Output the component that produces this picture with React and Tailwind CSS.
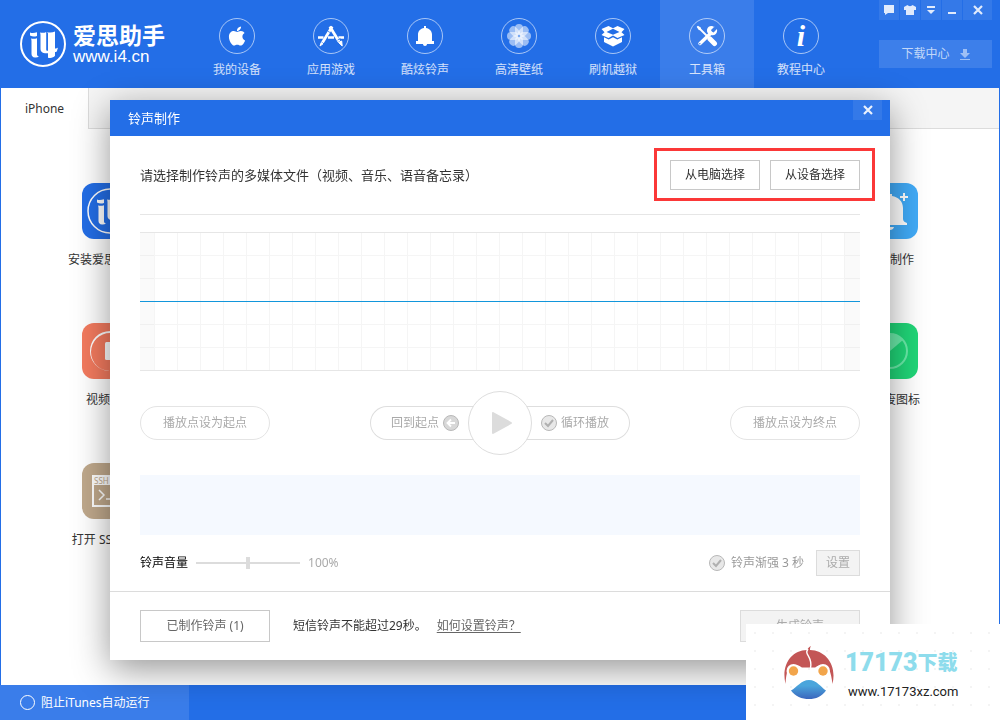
import { useState } from 'react';
import { FaApple } from 'react-icons/fa';

function LogoMark({ className, ring = 2 }) {
  return (
    <svg viewBox="0 0 46 46" className={className} fill="none" stroke="currentColor">
      <circle cx="23" cy="23" r="22" strokeWidth={ring} />
      <path d="M10 11.500c2 .8 4.500.6 7-.3V15c-2.500.8-4.500.8-7-.5z" fill="currentColor" stroke="none" />
      <path d="M11 17.500c2 .6 4 .4 6-.3V33.500c0 1 .8 1.800 2 2-1.200.8-2.300 1.200-4 1-2.500-.3-3.500-1.600-3.500-3.800V20c0-1-.2-1.800-.5-2.500z" fill="currentColor" stroke="none" />
      <path d="M20 11.500c2.300.6 4.500.4 6.200-.5v17.500c0 1 .7 1.400 1.800 1.200V13c0-1-.3-1.500-1-2 2.500.8 5.500.7 8-.5V27.500c1.300 0 2.200-.3 3-1l-1.200 4c-.6.4-1.200.5-1.800.5v3.800c-1.500 1.900-4 2.600-7 1.900v-4.500c-5 .4-7.500-1-7.500-4.700V14c0-1-.2-1.800-.5-2.500z" fill="currentColor" stroke="none" />
    </svg>
  );
}

function AppsIcon() {
  return (
    <svg viewBox="0 0 26 22" className="h-[22px] w-[26px]" stroke="currentColor" fill="none">
      <path d="M0 12.500h5.500M10 12.500h6M20.500 12.500H26" strokeWidth="2.600" />
      <path d="M14.200 1.500 4.500 17.500" strokeWidth="2.800" />
      <path d="M11.800 1.500 21 16.500" strokeWidth="2.800" />
      <path d="M3.200 17.500 2 21l3-2.200zM20.500 17.500l3.700 3.500-.5-5z" fill="currentColor" strokeWidth="1" />
      <path d="m9.500 6 3 1.800M19.500 15.200l3-1.800" stroke="#236ee7" strokeWidth="0.800" />
    </svg>
  );
}

function BellIcon({ className = 'h-5 w-[18px]' }) {
  return (
    <svg viewBox="0 0 18 20" className={className} fill="currentColor">
      <path d="M8 0h2v2c3.600.5 6 3.200 6 6.500V15h2v3h-7c0 1-.8 2-2 2s-2-1-2-2H0v-3h2V8.500C2 5.200 4.400 2.500 8 2z" />
    </svg>
  );
}

function FlowerIcon() {
  return (
    <svg viewBox="0 0 24 24" className="size-6" fill="currentColor">
      {[0, 45, 90, 135, 180, 225, 270, 315].map(a => (
        <rect key={a} x="8" y="0" width="8" height="11.500" rx="4" opacity="0.550" transform={`rotate(${a} 12 12)`} />
      ))}
      <circle cx="12" cy="12" r="1.200" fill="#7aa8f1" />
    </svg>
  );
}

function BoxIcon() {
  return (
    <svg viewBox="0 0 24 22" className="h-[22px] w-6" fill="currentColor">
      <path d="M7.500 1 12 3.300 16.500 1 23.500 4 20.500 7.300 23.500 10 16.500 13 12 10.500 7.500 13 .5 10 3.500 7.300.5 4z" />
      <path d="M12 3.800 18.500 7 12 9.800 5.500 7z" fill="#236ee7" />
      <path d="M3 12.300 7.700 14.400 12 12.300l4.300 2.100 4.700-2.100V17l-9 4.500L3 17z" />
    </svg>
  );
}

function ToolsIcon() {
  return (
    <svg viewBox="0 0 22 22" className="size-[22px]" fill="none" stroke="currentColor">
      <path d="M4 18.500 15 8" strokeWidth="3.400" strokeLinecap="round" />
      <path d="M18.500 1.500 15 5l.8 1.700 1.800.7 3.300-3.300c1 3.500-1.400 6.500-4.900 6.200-3.500-.2-5.800-3-4.800-6.300.9-2.700 4.200-4.200 7.300-1.800z" fill="currentColor" stroke="none" />
      <path d="m3 3 10 10" strokeWidth="1.800" />
      <path d="M.8 1.500 2 .8l3 2v2l-2 .5-2-2.800z" fill="currentColor" stroke="none" />
      <path d="m14 14 4.500 4.500" strokeWidth="5" strokeLinecap="round" />
      <circle cx="3.800" cy="18.700" r=".8" fill="#3a7dea" stroke="none" />
    </svg>
  );
}

function InfoIcon() {
  return <span className="font-['Liberation_Serif',serif] text-[30px] leading-none font-bold italic">i</span>;
}

function CloseIcon() {
  return (
    <svg viewBox="0 0 10 10" className="size-2.5" stroke="currentColor" strokeWidth="2.200">
      <path d="m1 1 8 8M9 1 1 9" />
    </svg>
  );
}

const navItems = [
  { label: '我的设备', icon: <FaApple size={22} /> },
  { label: '应用游戏', icon: <AppsIcon /> },
  { label: '酷炫铃声', icon: <BellIcon /> },
  { label: '高清壁纸', icon: <FlowerIcon /> },
  { label: '刷机越狱', icon: <BoxIcon /> },
  { label: '工具箱', icon: <ToolsIcon />, active: true },
  { label: '教程中心', icon: <InfoIcon /> },
];

const windowButtons = [
  {
    label: '反馈',
    icon: (
      <svg viewBox="0 0 10 10" className="size-2.5" fill="currentColor">
        <path d="M0 0h10v8H4l-3 2V8H0z" />
      </svg>
    ),
  },
  {
    label: '皮肤',
    icon: (
      <svg viewBox="0 0 12 10" className="h-2.5 w-3" fill="currentColor">
        <path d="M3.500 0c1 1.500 4 1.500 5 0L12 2v3h-2v5H2V5H0V2z" />
      </svg>
    ),
  },
  {
    label: '菜单',
    icon: (
      <svg viewBox="0 0 8 8" className="size-2" fill="currentColor">
        <path d="M0 0h8v2H0zM0 4h8L4 8z" />
      </svg>
    ),
  },
  {
    label: '最小化',
    icon: (
      <svg viewBox="0 0 8 8" className="size-2" fill="currentColor">
        <path d="M0 6h8v2H0z" />
      </svg>
    ),
  },
];

function Header() {
  return (
    <header className="flex h-22 text-white">
      <a href="#home" className="flex w-[190px] items-start pt-[21px] pl-5">
        <LogoMark className="size-[46px]" />
        <span className="ml-[7px] flex flex-col">
          <span className="text-[23px] leading-7 font-bold whitespace-nowrap">爱思助手</span>
          <span className="font-['Liberation_Sans',sans-serif] text-[17px] leading-4">www.i4.cn</span>
        </span>
      </a>
      <nav className="flex">
        {navItems.map(item => (
          <a
            key={item.label}
            href="#nav"
            className={`flex w-[94px] flex-col items-center pt-[18px] ${item.active ? 'bg-[#3a7dea]' : ''}`}
          >
            <span className="flex size-9 items-center justify-center rounded-full border border-white/60">
              {item.icon}
            </span>
            <span className="mt-[7px] leading-[18px] text-white/80">{item.label}</span>
          </a>
        ))}
      </nav>
      <div className="mr-2 ml-auto flex w-[113px] flex-col gap-5">
        <div className="flex h-5 gap-px text-white/85">
          {windowButtons.map(b => (
            <button key={b.label} aria-label={b.label} className="flex w-5 items-center justify-center bg-white/8">
              {b.icon}
            </button>
          ))}
          <button aria-label="关闭" className="flex flex-1 items-center justify-center bg-white/8">
            <CloseIcon />
          </button>
        </div>
        <button className="flex h-7 items-center justify-center gap-2.5 bg-white/12 text-white/70">
          下载中心
          <svg viewBox="0 0 10 11" className="h-[11px] w-2.5 text-white/50" fill="currentColor">
            <path d="M3 0h4v4h3L5 9 0 4h3zM0 10h10v1H0z" />
          </svg>
        </button>
      </div>
    </header>
  );
}

const tools = [
  [
    {
      label: '安装爱思移动端',
      tile: 'bg-[#236ee7]',
      icon: <LogoMark className="size-[46px]" ring={1.5} />,
    },
    {
      label: '铃声制作',
      tile: 'bg-[#41abf8]',
      icon: (
        <svg viewBox="0 0 56 56" className="size-14" fill="currentColor">
          <path d="M26 11h4v2c6.500 1 11 5.500 11 12v11c0 2 1.500 3 4 4v2H11v-2c2.500-1 4-2 4-4V25c0-6.500 4.500-11 11-12zM24 44h8c-.5 2-2 3-4 3s-3.500-1-4-3z" />
          <path d="M41 10h2v3h3v2h-3v3h-2v-3h-3v-2h3z" />
        </svg>
      ),
    },
  ],
  [
    {
      label: '视频转换',
      tile: 'bg-[#f47b5f]',
      icon: (
        <svg viewBox="0 0 56 56" className="size-14" fill="currentColor">
          <path d="M28 8a20 20 0 0 0 0 40A19 19 0 0 1 28 10z" />
          <rect x="23" y="19" width="10" height="18" rx="1.500" />
        </svg>
      ),
    },
    {
      label: '删除废图标',
      tile: 'bg-[#20d678]',
      icon: (
        <svg viewBox="0 0 56 56" className="size-14 text-[#6becaa]">
          <circle cx="28" cy="28" r="17" fill="none" stroke="currentColor" strokeWidth="2" />
          <path d="M28 28V11c5 0 9.500 2 13 6z" fill="currentColor" />
        </svg>
      ),
    },
  ],
  [
    {
      label: '打开 SSH 通道',
      tile: 'bg-[#c0a98c]',
      icon: (
        <span className="flex h-8 w-9 flex-col border-2 border-white text-left">
          <span className="bg-white text-[8px] leading-2 text-[#c0a98c]">SSH</span>
          <svg viewBox="0 0 32 20" className="h-5 w-8" fill="none" stroke="currentColor" strokeWidth="1.500">
            <path d="m5 5 5 5-5 5M12 14h8" />
          </svg>
        </span>
      ),
    },
  ],
];

function Toolbox() {
  return (
    <main className="mx-px flex-1 bg-white">
      <div className="flex h-[41px]">
        <button className="w-[87px] text-[#333]">iPhone</button>
        <div className="flex-1 border-b border-l border-[#dcdcdc] bg-[#f5f5f5]" />
      </div>
      <div className="flex flex-col gap-[55px] px-11 pt-[54px] text-[#333]">
        {tools.map((row, i) => (
          <div key={i} className="flex justify-between">
            {row.map(tool => (
              <button key={tool.label} className="flex w-[130px] flex-col items-center gap-[13px]">
                <span className={`flex size-14 items-center justify-center rounded-xl text-white ${tool.tile}`}>
                  {tool.icon}
                </span>
                <span className="leading-4 whitespace-nowrap">{tool.label}</span>
              </button>
            ))}
          </div>
        ))}
      </div>
    </main>
  );
}

function RoundCheck({ label, className, checked, onChange }) {
  return (
    <label className={`flex items-center ${className}`}>
      <span className="grid size-4 place-items-center">
        <input
          type="checkbox"
          checked={checked}
          onChange={onChange}
          className="peer col-start-1 row-start-1 size-4 appearance-none rounded-full border border-[#b8b8b8] bg-[#e8e8e8]"
        />
        <svg
          viewBox="0 0 10 10"
          className="pointer-events-none invisible col-start-1 row-start-1 size-2.5 peer-checked:visible"
          fill="none"
          stroke="#b0b0b0"
          strokeWidth="2"
        >
          <path d="m1 5 3 3 5-6" />
        </svg>
      </span>
      {label}
    </label>
  );
}

function Waveform() {
  return (
    <div className="relative mt-[17px] flex h-[139px] border-y border-[#e6e6e6] bg-[linear-gradient(to_top,#f5f5f5_1px,transparent_1px)] bg-size-[23px_23px]">
      <div className="w-3.5 bg-black/2" />
      <div className="flex-1 bg-[linear-gradient(to_right,#f5f5f5_1px,transparent_1px)] bg-size-[23px_23px]" />
      <div className="w-4 border-l border-[#f3f3f3] bg-black/2" />
      <div className="absolute inset-x-0 top-17 h-px bg-[#1296db]" />
    </div>
  );
}

function RingtoneDialog() {
  const [loop, setLoop] = useState(true);
  const [fade, setFade] = useState(true);
  const [volume, setVolume] = useState(50);

  return (
    <div className="fixed inset-0 flex items-start justify-center pt-[100px]">
      <section role="dialog" aria-label="铃声制作" className="w-full max-w-[780px] bg-white shadow-[0_9px_34px_rgba(0,0,0,0.42)]">
        <div className="flex h-9 bg-[#236ee7] pr-2 pl-[18px] text-[13px] text-white">
          <h1 className="leading-9">铃声制作</h1>
          <button aria-label="关闭" className="ml-auto flex h-5 w-[29px] items-center justify-center bg-white/8 text-white/90">
            <CloseIcon />
          </button>
        </div>

        <div className="px-[30px] pt-6">
          <div className="flex items-center border-b border-[#e6e6e6] pb-6 text-[#333]">
            <p className="text-[13px] leading-[30px]">请选择制作铃声的多媒体文件（视频、音乐、语音备忘录）</p>
            <div className="relative ml-auto flex gap-2.5">
              <button className="h-[30px] w-[90px] border border-[#c8c8c8]">从电脑选择</button>
              <button className="h-[30px] w-[90px] border border-[#c8c8c8]">从设备选择</button>
              <div className="pointer-events-none absolute -top-3 -right-[15px] -bottom-[11px] -left-4 border-3 border-[#fb3838]" />
            </div>
          </div>

          <Waveform />

          <div className="mt-5 flex items-center justify-between text-[#aaa]">
            <button className="h-[34px] w-[130px] rounded-full border border-[#e4e4e4]">播放点设为起点</button>
            <div className="flex items-center">
              <button className="-mr-3 flex h-[34px] w-[110px] items-center gap-1 rounded-l-full border border-r-0 border-[#dedede] pl-5">
                回到起点
                <svg viewBox="0 0 16 16" className="size-4" fill="none">
                  <circle cx="8" cy="8" r="7.500" fill="#d8d8d8" stroke="#b8b8b8" />
                  <path d="M12 8H5M8 4.500 4.500 8 8 11.500" stroke="#fff" strokeWidth="1.800" />
                </svg>
              </button>
              <button aria-label="播放" className="z-10 flex size-16 items-center justify-center rounded-full border border-[#dedede] bg-white">
                <svg viewBox="0 0 20 22" className="ml-1 h-[22px] w-5" fill="#dcdcdc" stroke="#dcdcdc" strokeWidth="2" strokeLinejoin="round">
                  <path d="M1 1v20l18-10z" />
                </svg>
              </button>
              <RoundCheck
                label="循环播放"
                checked={loop}
                onChange={e => setLoop(e.target.checked)}
                className="-ml-3 h-[34px] w-[110px] gap-1 rounded-r-full border border-l-0 border-[#dedede] pl-[21px]"
              />
            </div>
            <button className="h-[34px] w-[130px] rounded-full border border-[#e4e4e4]">播放点设为终点</button>
          </div>

          <div className="mt-5 h-15 bg-[#f5f9ff]" />

          <div className="flex items-center py-[15px] text-[#999]">
            <label htmlFor="volume" className="text-black">铃声音量</label>
            <input
              id="volume"
              type="range"
              value={volume}
              onChange={e => setVolume(Number(e.target.value))}
              className="mx-2 h-3 w-26 appearance-none bg-[linear-gradient(#dcdcdc,#dcdcdc)] bg-size-[100%_2px] bg-center bg-no-repeat [&::-webkit-slider-thumb]:h-3 [&::-webkit-slider-thumb]:w-1 [&::-webkit-slider-thumb]:appearance-none [&::-webkit-slider-thumb]:bg-[#dcdcdc]"
            />
            <span className="text-[#aaa]">{volume * 2}%</span>
            <RoundCheck label="铃声渐强 3 秒" checked={fade} onChange={e => setFade(e.target.checked)} className="mr-3 ml-auto gap-1.5" />
            <button disabled className="h-[26px] w-11 border border-[#dcdcdc] bg-[#f3f3f3] text-[#aaa]">设置</button>
          </div>
        </div>

        <div className="flex items-center border-t border-[#dcdcdc] px-[30px] py-[18px] text-[#333]">
          <button className="h-8 w-[130px] border border-[#c8c8c8] text-[#666]">已制作铃声 (1)</button>
          <p className="ml-[23px]">短信铃声不能超过29秒。</p>
          <a href="#help" className="ml-2.5 text-[#666] underline underline-offset-2">如何设置铃声？</a>
          <button disabled className="ml-auto h-8 w-30 border border-[#dcdcdc] bg-[#f3f3f3] text-[#aaa]">生成铃声</button>
        </div>
      </section>
    </div>
  );
}

function SiteBadge() {
  return (
    <aside className="fixed right-0 bottom-0 flex h-24 w-[254px] items-start bg-white bg-[radial-gradient(#f4f4f4_1px,transparent_1px)] bg-size-[18px_18px] pt-[22px] pl-[37px]">
      <svg viewBox="0 0 52 54" className="h-[54px] w-[52px]">
        <defs>
          <linearGradient id="beak" x1="0" y1="0" x2="0" y2="1">
            <stop offset="0.300" stopColor="#4aa5dc" />
            <stop offset="1" stopColor="#3b66bd" />
          </linearGradient>
        </defs>
        <path d="M2.500 38C-2 19 8 4.500 24 4c1-2 2-3 4-4-1 1.500-1 2.500-1 4 16 .5 27 15 22.500 34-.8-6-1.500-11-3.500-14-3-5-10-6-13-3l-1 .5H19l-1-.5c-3-3-10-2-13 3-1.500 3-2.200 8-2.500 14z" fill="#c35656" />
        <path d="M25 3c-4.500 6 5 7 2.500 19" fill="none" stroke="#fff" strokeWidth="1.400" />
        <circle cx="10.500" cy="25" r="7" fill="#fff" />
        <circle cx="40" cy="25" r="7" fill="#fff" />
        <circle cx="10.500" cy="25" r="4.700" fill="#f2a54b" />
        <circle cx="40" cy="25" r="4.700" fill="#f2a54b" />
        <path d="M8 44.500c6-3 10-10.500 18-10.500s12 7.500 17 10.500c-4 6-10 8.500-17 8.500S12 50.500 8 44.500z" fill="url(#beak)" />
      </svg>
      <div className="pt-0.5 pl-2.5">
        <div className="flex items-center font-['Roboto','Noto_Sans_CJK_SC',sans-serif] text-[25px] leading-[30px] font-black whitespace-nowrap text-[#8edcec]">
          17173<span className="text-[20px]">下载</span>
        </div>
        <div className="pl-[3px] font-['Roboto',sans-serif] text-[13px] leading-7 text-[#222]">www.17173xz.com</div>
      </div>
    </aside>
  );
}

export default function App() {
  const [blocked, setBlocked] = useState(false);

  return (
    <div className="flex min-h-screen flex-col bg-[#236ee7] font-['Noto_Sans','Noto_Sans_CJK_SC',sans-serif] text-xs">
      <Header />
      <Toolbox />
      <footer className="flex h-[35px]">
        <label className="flex w-[189px] items-center gap-1.5 bg-[#3a7dea] pl-5 text-white">
          <input
            type="checkbox"
            checked={blocked}
            onChange={e => setBlocked(e.target.checked)}
            className="size-[15px] appearance-none rounded-full border border-white checked:bg-white"
          />
          阻止iTunes自动运行
        </label>
      </footer>
      <RingtoneDialog />
      <SiteBadge />
    </div>
  );
}
